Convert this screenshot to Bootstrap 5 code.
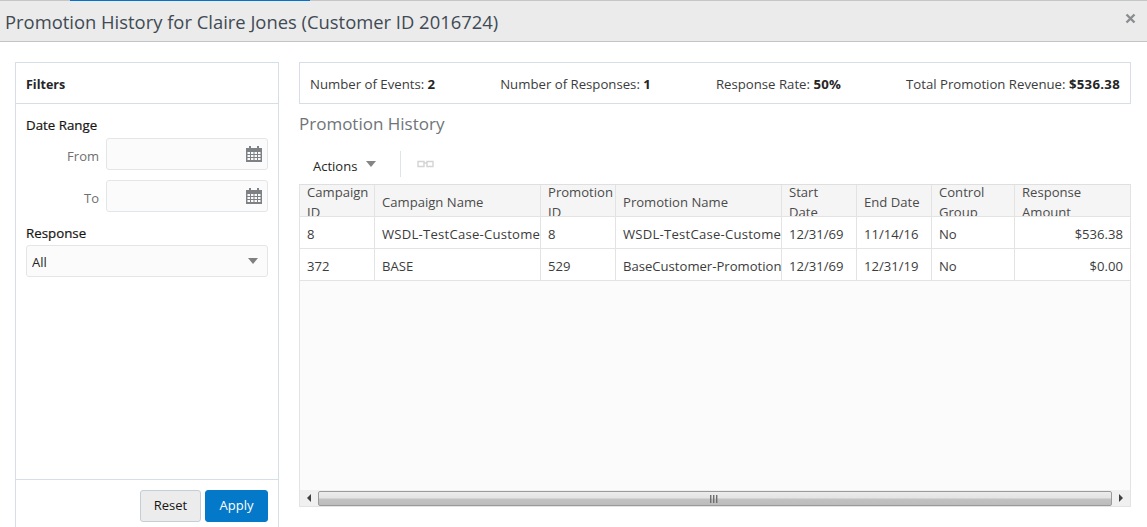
<!DOCTYPE html>
<html lang="en">
<head>
<meta charset="utf-8">
<title>Promotion History</title>
<link href="https://cdn.jsdelivr.net/npm/bootstrap@5.3.0/dist/css/bootstrap.min.css" rel="stylesheet">
<style>
html,body{height:527px;overflow:hidden;background:#fff}
body{font-family:"Open Sans","Liberation Sans",sans-serif;font-size:13px;line-height:20px;color:#252525}
.topline{height:1px;background:#c4c6c8;position:relative}
.topline-blue{position:absolute;left:70px;top:0;width:240px;height:1px;background:#0572ce}
.dlg-head{height:41px;background:#ebebeb;border-bottom:1px solid #c4c4c4;padding:0 5px}
.dlg-title{font-size:18.4px;font-weight:400;margin:0;color:#3f4a54;line-height:41px}
.dlg-close{width:11px;height:11px;margin:12px 6px 0 0;color:#8a8d90}
.dlg-main{padding:20px 16px 0 15px;gap:20px}
.filter-card{width:264px;height:480px;flex:none;border:1px solid #d6dfe6;border-radius:0;--bs-card-bg:#fff}
.filter-head{height:41px;padding:0 10px;background:#fff;border-bottom:1px solid #d6dfe6;border-radius:0!important;font-weight:700;line-height:43px;color:#252525;font-size:12.5px}
.filter-body{padding:11px 10px 0}
.sec-label{font-size:13.3px;font-weight:400;line-height:20px;margin:0 0 3px;color:#161513;-webkit-text-stroke:.2px #161513}
.date-row{height:32px;margin-bottom:10px;gap:7px}
.date-row+.sec-label{margin-top:11px;margin-bottom:2px}
.date-row+.date-row{margin-bottom:0}
.date-label{width:73px;text-align:right;color:#6f6f6f;padding-top:8px}
.date-field{flex:1;height:32px;position:relative}
.date-input{height:32px;background:#fbfbfb;border:1px solid #e3e6e8;border-radius:3px;padding:0 6px;font-size:13px}
.cal-ico{position:absolute;right:6px;top:8px;width:16px;height:16px}
.resp-select{height:32px;background-color:#fbfbfb;border:1px solid #e3e6e8;border-radius:3px;padding:3px 5px 0;font-size:13px;color:#252525;margin-top:0;background-position:right 9px center;background-size:10px 6px;background-image:url("data:image/svg+xml,%3Csvg xmlns='http://www.w3.org/2000/svg' viewBox='0 0 10 6'%3E%3Cpath d='M0 0h10L5 6z' fill='%23808080'/%3E%3C/svg%3E")}
.filter-foot{height:48px;flex:none;position:absolute;left:0;right:0;top:416px;background:#fff;border-top:1px solid #d6dfe6;border-radius:0!important;padding:10px 10px 0;gap:4px}
.btn-reset{height:32px;width:61px;padding:0;font-size:13px;background:#ececec;border:1px solid #c4ced7;border-radius:3px;color:#161513}
.btn-apply{height:32px;width:63px;padding:0;font-size:13px;background:#0579c9;border:1px solid #0579c9;border-radius:3px;color:#fff}
.right-col{width:832px;flex:none}
.summary-bar{height:42px;border:1px solid #d6dfe6;padding:0 10px;line-height:43px;font-size:13.2px;color:#3c3c3c;overflow:hidden}
.summary-bar b{color:#252525;letter-spacing:.3px}
.sec-title{font-size:17px;font-weight:400;color:#6f7478;line-height:24px;margin:8px 0 0}
.tool-row{height:35px;margin-top:13px;padding-left:14px;align-items:flex-start}
.act-btn{color:#252525;font-size:13px;gap:9px;width:88px;height:26px;border-right:1px solid #dfe4e7;margin-top:2px}
.act-btn span:first-child{padding-top:3px}
.act-caret{width:0;height:0;border-left:5px solid transparent;border-right:5px solid transparent;border-top:6px solid #858585}
.glass-ico{margin-left:16px;width:17px;height:8px;margin-top:11px}
.grid-box{height:323px;border:1px solid #e3e3e3;border-top-color:#dfdfdf;background:#fbfbfb;width:832px}
.grid-table{table-layout:fixed;width:830px;margin:0;border-collapse:separate;border-spacing:0;--bs-table-bg:transparent;font-size:13.1px}
.grid-table th,.grid-table td{border:0 solid #e3e3e3;border-width:0 1px 1px 0;padding:0 0 0 7px;height:32px;font-weight:400;white-space:nowrap;overflow:hidden;color:#3c3c3c;vertical-align:middle}
.grid-table td{padding-top:2px;background:#fff}
.grid-table th:last-child,.grid-table td:last-child{border-right:0}
.grid-table th{background:#f5f5f5;color:#4b4b4b}
.grid-table td.cell-wide{letter-spacing:.24px}
.th-inner{height:31px;padding-top:2px;display:flex;align-items:center;white-space:normal;line-height:20px;overflow:hidden}
.cell-amt{text-align:right;padding-right:7px!important}
.grid-fill{flex:1}
.scroll-track{height:16px;background:#f0f0f0;padding:0 1px}
.scroll-arrow{width:17px;height:16px;flex:none}
.scroll-thumb{flex:1;height:15px;border:1px solid #9a9a9a;border-radius:2px;background:linear-gradient(#ececec,#e4e4e4 45%,#c2c2c2 55%,#bcbcbc);position:relative}
.thumb-grip{position:absolute;left:50%;top:3px;width:9px;height:8px;margin-left:-6px}
</style>
</head>
<body>
<div class="topline"><div class="topline-blue"></div></div>
<div class="dlg-head d-flex justify-content-between">
  <h1 class="dlg-title">Promotion History for Claire Jones (Customer ID 2016724)</h1>
  <svg class="dlg-close" viewBox="0 0 11 11"><path d="M1.500 1.500l8 8M9.500 1.500l-8 8" stroke="currentColor" stroke-width="2.400" fill="none"/></svg>
</div>
<div class="dlg-main d-flex align-items-start">
  <div class="card filter-card position-relative">
    <div class="card-header filter-head">Filters</div>
    <div class="card-body filter-body">
      <div class="sec-label">Date Range</div>
      <div class="d-flex date-row">
        <div class="date-label">From</div>
        <div class="date-field">
          <input class="form-control date-input" type="text" aria-label="From">
          <svg class="cal-ico" viewBox="0 0 16 16"><use href="#cal"/></svg>
        </div>
      </div>
      <div class="d-flex date-row">
        <div class="date-label">To</div>
        <div class="date-field">
          <input class="form-control date-input" type="text" aria-label="To">
          <svg class="cal-ico" viewBox="0 0 16 16"><use href="#cal"/></svg>
        </div>
      </div>
      <div class="sec-label">Response</div>
      <select class="form-select resp-select" aria-label="Response"><option>All</option></select>
    </div>
    <div class="card-footer filter-foot d-flex justify-content-end">
      <button class="btn btn-reset" type="button">Reset</button>
      <button class="btn btn-apply" type="button">Apply</button>
    </div>
  </div>
  <div class="right-col">
    <div class="summary-bar d-flex justify-content-between">
      <span>Number of Events: <b>2</b></span>
      <span>Number of Responses: <b>1</b></span>
      <span>Response Rate: <b>50%</b></span>
      <span>Total Promotion Revenue: <b>$536.38</b></span>
    </div>
    <h2 class="sec-title">Promotion History</h2>
    <div class="d-flex tool-row">
      <div class="d-flex align-items-center act-btn"><span>Actions</span><span class="act-caret"></span></div>
      <svg class="glass-ico" viewBox="0 0 17 8"><path d="M1 1.500h6v5H1zM10 1.500h6v5h-6zM7 3h3" fill="none" stroke="#d4d4d4" stroke-width="1.400"/></svg>
    </div>
    <div class="grid-box d-flex flex-column">
      <table class="table grid-table">
        <colgroup><col style="width:75px"><col style="width:166px"><col style="width:75px"><col style="width:166px"><col style="width:75px"><col style="width:75px"><col style="width:83px"><col style="width:115px"></colgroup>
        <thead>
          <tr>
            <th><div class="th-inner">Campaign ID</div></th>
            <th><div class="th-inner">Campaign Name</div></th>
            <th><div class="th-inner">Promotion ID</div></th>
            <th><div class="th-inner">Promotion Name</div></th>
            <th><div class="th-inner">Start<br>Date</div></th>
            <th><div class="th-inner">End Date</div></th>
            <th><div class="th-inner">Control Group</div></th>
            <th><div class="th-inner">Response Amount</div></th>
          </tr>
        </thead>
        <tbody>
          <tr><td>8</td><td class="cell-wide">WSDL-TestCase-Custome</td><td>8</td><td class="cell-wide">WSDL-TestCase-Custome</td><td>12/31/69</td><td>11/14/16</td><td>No</td><td class="cell-amt">$536.38</td></tr>
          <tr><td>372</td><td>BASE</td><td>529</td><td>BaseCustomer-Promotion</td><td>12/31/69</td><td>12/31/19</td><td>No</td><td class="cell-amt">$0.00</td></tr>
        </tbody>
      </table>
      <div class="grid-fill"></div>
      <div class="scroll-track d-flex align-items-center">
        <svg class="scroll-arrow" viewBox="0 0 17 16"><path d="M6 8l4-4v8z" fill="#404040"/></svg>
        <div class="scroll-thumb"><svg class="thumb-grip" viewBox="0 0 9 8"><path d="M1 0h1.400v8H1zM4 0h1.400v8H4zM7 0h1.400v8H7z" fill="#6e6e6e"/></svg></div>
        <svg class="scroll-arrow" viewBox="0 0 17 16"><path d="M7 4l4 4-4 4z" fill="#404040"/></svg>
      </div>
    </div>
  </div>
</div>
<svg width="0" height="0" class="d-block position-absolute"><defs><symbol id="cal" viewBox="0 0 16 16"><path fill-rule="evenodd" fill="#7f8285" d="M0 2h3V0h2v2h6V0h2v2h3v14H0zM1.500 6v2h2.500V6zM5 6v2h2.500V6zM8.500 6v2H11V6zM12 6v2h2.500V6zM1.500 9v2h2.500V9zM5 9v2h2.500V9zM8.500 9v2H11V9zM12 9v2h2.500V9zM1.500 12v2h2.500v-2zM5 12v2h2.500v-2zM8.500 12v2H11v-2zM12 12v2h2.500v-2z"/></symbol></defs></svg>
</body>
</html>
